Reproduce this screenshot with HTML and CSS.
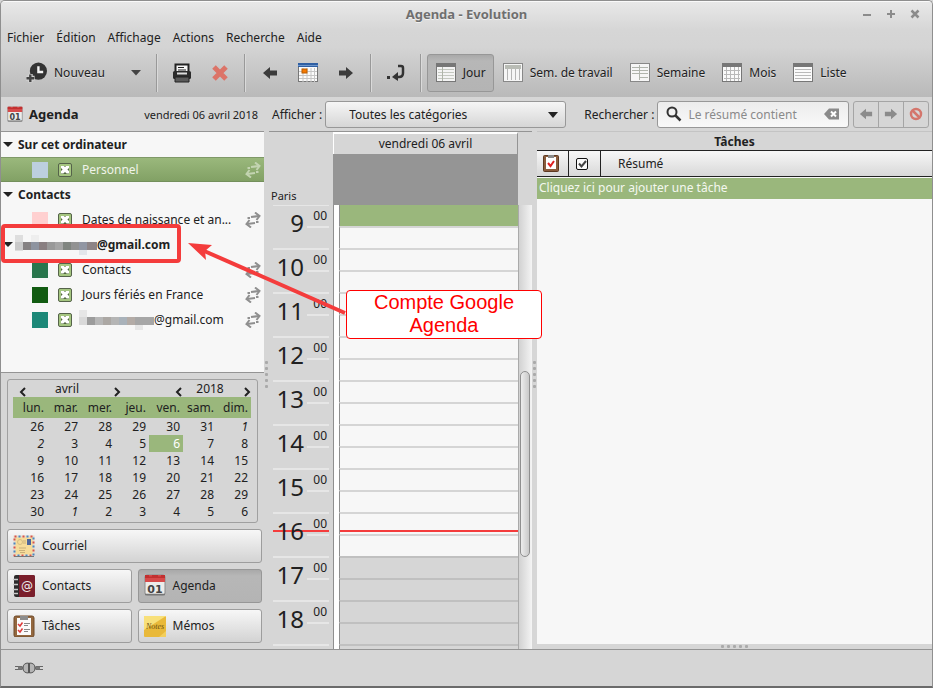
FILE: index.html
```html
<!DOCTYPE html>
<html lang="fr">
<head>
  <meta charset="UTF-8" />
  <meta name="viewport" content="width=device-width, initial-scale=1.0"/>
  <title>Agenda - Evolution</title>
  <link rel="stylesheet" href="styles.css">
</head>
<body>

<!-- shared icons -->
<svg class="defs" width="0" height="0" aria-hidden="true">
  <symbol id="sync" viewBox="0 0 16 16">
    <g fill="none" stroke="currentColor" stroke-width="2">
      <path d="M2.500 6h2.500M6 5L14 4"/>
      <path d="M10 .5l4.500 3.500-3 4"/>
      <path d="M13.500 10H11M10 11l-8 1"/>
      <path d="M6 15.500L1.500 12l3-4"/>
    </g>
  </symbol>
  <symbol id="arrow-left" viewBox="0 0 16 16">
    <path d="M1 8l7-6v3.500h7v5H8V14z" fill="currentColor"/>
  </symbol>
  <symbol id="arrow-right" viewBox="0 0 16 16">
    <path d="M15 8L8 2v3.500H1v5h7V14z" fill="currentColor"/>
  </symbol>
  <symbol id="calendar" viewBox="0 0 22 22">
    <rect x="1" y="1" width="20" height="20" rx="2" fill="#ececea" stroke="#8a8a8a"/>
    <path d="M1 1h20v7H1z" fill="#d64a4a"/>
    <path d="M1 1h4v1.500h3V1h6v1.500h3V1h4v3H1z" fill="#c23030"/>
    <path d="M1 20.500h20" stroke="#777" stroke-width="1.500"/>
  </symbol>
</svg>

<div class="window">
  <header class="chrome">
    <div class="titlebar">
      <h1>Agenda - Evolution</h1>
      <div class="win-buttons">
        <button aria-label="Réduire"><svg width="10" height="10"><path d="M1 6h8" stroke="#8b8b8b" stroke-width="2"/></svg></button>
        <button aria-label="Agrandir"><svg width="10" height="10"><path d="M1 5h8M5 1v8" stroke="#8b8b8b" stroke-width="2"/></svg></button>
        <button aria-label="Fermer"><svg width="10" height="10"><path d="M1.500 1.500l7 7M8.500 1.500l-7 7" stroke="#8b8b8b" stroke-width="2.500"/></svg></button>
      </div>
    </div>

    <nav class="menubar">
      <a href="#">Fichier</a>
      <a href="#">Édition</a>
      <a href="#">Affichage</a>
      <a href="#">Actions</a>
      <a href="#">Recherche</a>
      <a href="#">Aide</a>
    </nav>

    <div class="toolbar">
      <button class="tool">
        <svg width="21" height="22" viewBox="0 0 22 22">
          <circle cx="13" cy="9" r="9" fill="#333"/>
          <path d="M13 4v6h5" fill="none" stroke="#f4f4f4" stroke-width="2.500"/>
          <path d="M4.500 12v9M0 16.500h9" stroke="#d0d0d0" stroke-width="5"/>
          <path d="M4.500 12.500v8M.5 16.500h8" stroke="#444" stroke-width="2.500"/>
        </svg>
        Nouveau
      </button>
      <button class="tool drop" aria-label="Plus de choix"><svg width="10" height="6"><path d="M0 0h10L5 5.500z" fill="#444"/></svg></button>
      <span class="sep"></span>
      <button class="tool" aria-label="Imprimer">
        <svg width="20" height="20" viewBox="0 0 20 20">
          <rect x="1" y="8" width="18" height="8" rx="1.500" fill="#2c2c2c"/>
          <path d="M3.500 8V1.500h13V8" fill="#f6f6f6" stroke="#222" stroke-width="2"/>
          <path d="M6 4.500h6M6 7h8" stroke="#222"/>
          <rect x="5" y="9.500" width="10" height="2" fill="#ddd"/>
          <path d="M3 14h14v5H3z" fill="#5a5a5a" stroke="#222"/>
        </svg>
      </button>
      <button class="tool" aria-label="Supprimer">
        <svg width="20" height="20" viewBox="0 0 20 20"><path d="M4 4L16 16M16 4L4 16" stroke="#dc7468" stroke-width="5"/></svg>
      </button>
      <span class="sep"></span>
      <button class="tool dark" aria-label="Précédent"><svg width="20" height="16"><use href="#arrow-left"/></svg></button>
      <button class="tool" aria-label="Aujourd'hui">
        <svg width="20" height="20" viewBox="0 0 20 20">
          <rect x=".5" y=".5" width="19" height="18" fill="#fbfbfb" stroke="#777"/>
          <path d="M0 0h20v4H0z" fill="#2f5fa3"/>
          <path d="M0 2.500h20" stroke="#6f97cc"/>
          <path d="M1 8.500h18M1 12.500h18M1 15.500h18M5 5v14M9 5v14M13 5v14M16.500 5v14" stroke="#c6c6c6"/>
          <rect x="4" y="6" width="5" height="4" fill="#f57900" stroke="#b85c00"/>
        </svg>
      </button>
      <button class="tool dark" aria-label="Suivant"><svg width="20" height="16"><use href="#arrow-right"/></svg></button>
      <span class="sep"></span>
      <button class="tool" aria-label="Aller à la date">
        <svg width="20" height="20" viewBox="0 0 20 20">
          <path d="M12 3h3q2 0 2 2v5q0 4-4 4h-1" fill="none" stroke="#333" stroke-width="2.500"/>
          <path d="M6 14l6-5v9z" fill="#333"/>
          <rect x="1" y="13" width="3" height="3" fill="#333"/>
        </svg>
      </button>
      <span class="sep"></span>
      <button class="tool view active">
        <svg width="20" height="20" viewBox="0 0 20 20">
          <rect x=".5" y=".5" width="19" height="18" fill="#f4f4f4" stroke="#777"/>
          <path d="M0 0h20v4H0z" fill="#777"/>
          <path d="M2 6.500h16M2 9.500h16M2 12.500h16M2 15.500h16" stroke="#c4c8c0"/>
          <path d="M6.500 4v14" stroke="#b0b5aa"/>
        </svg>
        Jour
      </button>
      <button class="tool view">
        <svg width="20" height="20" viewBox="0 0 20 20">
          <rect x=".5" y=".5" width="19" height="18" fill="#f6f6f6" stroke="#888"/>
          <path d="M2 2h16v4H2z" fill="#b9bcb5"/>
          <path d="M4.500 6v11M8.500 6v11M12.500 6v11M16.500 6v11" stroke="#b5b5b5"/>
        </svg>
        Sem. de travail
      </button>
      <button class="tool view">
        <svg width="20" height="20" viewBox="0 0 20 20">
          <rect x=".5" y=".5" width="19" height="18" fill="#f6f6f6" stroke="#888"/>
          <path d="M2 4.500h16M2 7.500h16M2 10.500h16M10 14.500h8M9.500 2v15" stroke="#b0b4ac"/>
        </svg>
        Semaine
      </button>
      <button class="tool view">
        <svg width="20" height="20" viewBox="0 0 20 20">
          <rect x=".5" y=".5" width="19" height="18" fill="#fafafa" stroke="#777"/>
          <path d="M0 0h20v4H0z" fill="#777"/>
          <path d="M2 7.500h16M2 11.500h16M2 15.500h16M4.500 4v14M8.500 4v14M12.500 4v14M16.500 4v14" stroke="#b9b9b9"/>
        </svg>
        Mois
      </button>
      <button class="tool view">
        <svg width="20" height="20" viewBox="0 0 20 20">
          <rect x=".5" y=".5" width="19" height="18" fill="#fafafa" stroke="#777"/>
          <path d="M0 0h20v4H0z" fill="#777"/>
          <path d="M2 6.500h16M2 9.500h16M2 12.500h16M2 15.500h16" stroke="#b9b9b9"/>
        </svg>
        Liste
      </button>
    </div>
  </header>

  <div class="searchbar">
    <div class="view-title">
      <svg width="16" height="17" viewBox="0 0 22 23">
        <use href="#calendar" width="22" height="22"/>
        <text x="11" y="19" class="cal-digits">01</text>
      </svg>
      <strong>Agenda</strong>
      <span class="date">vendredi 06 avril 2018</span>
    </div>
    <label for="categories">Afficher :</label>
    <div class="combo">
      <select id="categories"><option>Toutes les catégories</option></select>
      <svg width="10" height="6"><path d="M0 0h10L5 6z" fill="#222"/></svg>
    </div>
    <label for="search" class="search-label">Rechercher :</label>
    <div class="search">
      <svg width="16" height="16" viewBox="0 0 16 16"><circle cx="6" cy="6" r="4.500" fill="none" stroke="#333" stroke-width="2"/><path d="M9.500 9.500l5 5" stroke="#333" stroke-width="2.500"/></svg>
      <input type="text" id="search" placeholder="Le résumé contient">
      <svg width="16" height="12" viewBox="0 0 16 12"><path d="M0 6l5-5.500h10v11H5z" fill="#8a8a8a"/><path d="M7 3.500l5 5M12 3.500l-5 5" stroke="#fff" stroke-width="2"/></svg>
    </div>
    <div class="search-nav">
      <button aria-label="Résultat précédent"><svg width="14" height="14"><use href="#arrow-left"/></svg></button>
      <button aria-label="Résultat suivant"><svg width="14" height="14"><use href="#arrow-right"/></svg></button>
      <button aria-label="Arrêter"><svg width="14" height="14" viewBox="0 0 14 14"><circle cx="7" cy="7" r="5" fill="none" stroke="#d4766c" stroke-width="2.500"/><path d="M3.500 3.500l7 7" stroke="#d4766c" stroke-width="2.500"/></svg></button>
    </div>
  </div>

  <main class="panes">
    <aside class="sidebar">
      <div class="tree">
        <div class="group">Sur cet ordinateur</div>
        <label class="source selected">
          <span class="swatch lightblue"></span>
          <input type="checkbox" checked>
          <span class="name">Personnel</span>
          <svg width="16" height="16"><use href="#sync"/></svg>
        </label>
        <div class="group">Contacts</div>
        <label class="source">
          <span class="swatch pink"></span>
          <input type="checkbox" checked>
          <span class="name">Dates de naissance et an...</span>
          <svg width="16" height="16"><use href="#sync"/></svg>
        </label>
        <div class="group account">
          <svg class="mosaic" width="82" height="20" viewBox="0 0 82 20">
            <path d="M0 0h8v16H0z" fill="#dedede"/><path d="M16 0h8v8h-8z" fill="#eee"/>
            <path d="M0 7h8v8H0z" fill="#c9c9c9"/><path d="M8 7h8v8H8z" fill="#858182"/>
            <path d="M16 7h8v8h-8z" fill="#8d939f"/><path d="M24 7h8v8h-8z" fill="#897f81"/>
            <path d="M32 7h8v8h-8z" fill="#999"/><path d="M40 7h8v8h-8z" fill="#a5a5a5"/>
            <path d="M48 7h8v8h-8z" fill="#808580"/><path d="M56 7h8v8h-8z" fill="#929292"/>
            <path d="M64 7h8v8h-8z" fill="#9196a3"/><path d="M72 7h10v8H72z" fill="#8d8486"/>
            <path d="M64 15h8v5h-8z" fill="#e3e6ea"/>
          </svg>@gmail.com
        </div>
        <label class="source">
          <span class="swatch green"></span>
          <input type="checkbox" checked>
          <span class="name">Contacts</span>
          <svg width="16" height="16"><use href="#sync"/></svg>
        </label>
        <label class="source">
          <span class="swatch darkgreen"></span>
          <input type="checkbox" checked>
          <span class="name">Jours fériés en France</span>
          <svg width="16" height="16"><use href="#sync"/></svg>
        </label>
        <label class="source">
          <span class="swatch teal"></span>
          <input type="checkbox" checked>
          <span class="name masked">
            <svg class="mosaic" width="75" height="20" viewBox="0 0 75 20">
              <path d="M0 0h8v15H0z" fill="#e6e6e6"/><path d="M0 7h8v8H0z" fill="#d9d9d9"/>
              <path d="M8 7h8v8H8z" fill="#9c9c9c"/><path d="M16 7h8v8h-8z" fill="#b7b7b7"/>
              <path d="M24 7h8v8h-8z" fill="#aca8a4"/><path d="M32 7h8v8h-8z" fill="#b5b5b5"/>
              <path d="M40 7h8v8h-8z" fill="#a9b2ba"/><path d="M48 7h8v8h-8z" fill="#b3aba6"/>
              <path d="M56 7h19v8H56z" fill="#a6a6a6"/><path d="M56 15h8v5h-8z" fill="#e6e6e6"/>
            </svg>@gmail.com</span>
          <svg width="16" height="16"><use href="#sync"/></svg>
        </label>
      </div>

      <div class="sidebar-bottom">
        <div class="minical">
          <div class="minical-head">
            <button aria-label="Mois précédent"><svg width="8" height="10"><path d="M6 1L2 5l4 4" fill="none" stroke="#222" stroke-width="2"/></svg></button>
            <span class="month">avril</span>
            <button aria-label="Mois suivant"><svg width="8" height="10"><path d="M2 1l4 4-4 4" fill="none" stroke="#222" stroke-width="2"/></svg></button>
            <button class="year-prev" aria-label="Année précédente"><svg width="8" height="10"><path d="M6 1L2 5l4 4" fill="none" stroke="#222" stroke-width="2"/></svg></button>
            <span class="year">2018</span>
            <button aria-label="Année suivante"><svg width="8" height="10"><path d="M2 1l4 4-4 4" fill="none" stroke="#222" stroke-width="2"/></svg></button>
          </div>
          <table>
            <thead>
              <tr><th>lun.</th><th>mar.</th><th>mer.</th><th>jeu.</th><th>ven.</th><th>sam.</th><th>dim.</th></tr>
            </thead>
            <tbody>
              <tr><td>26</td><td>27</td><td>28</td><td>29</td><td>30</td><td>31</td><td><i>1</i></td></tr>
              <tr><td><i>2</i></td><td>3</td><td>4</td><td>5</td><td class="today">6</td><td>7</td><td>8</td></tr>
              <tr><td>9</td><td>10</td><td>11</td><td>12</td><td>13</td><td>14</td><td>15</td></tr>
              <tr><td>16</td><td>17</td><td>18</td><td>19</td><td>20</td><td>21</td><td>22</td></tr>
              <tr><td>23</td><td>24</td><td>25</td><td>26</td><td>27</td><td>28</td><td>29</td></tr>
              <tr><td>30</td><td><i>1</i></td><td>2</td><td>3</td><td>4</td><td>5</td><td>6</td></tr>
            </tbody>
          </table>
        </div>

        <div class="switcher">
          <button class="wide">
            <svg width="22" height="22" viewBox="0 0 22 22">
              <rect x="1.500" y="1.500" width="19" height="19" fill="#f6dc9a" stroke="#e6dccb" stroke-width="2"/>
              <rect x="1.500" y="1.500" width="19" height="19" fill="none" stroke="#d9534a" stroke-width="2" stroke-dasharray="2 6"/>
              <rect x="1.500" y="1.500" width="19" height="19" fill="none" stroke="#4a86c4" stroke-width="2" stroke-dasharray="2 6" stroke-dashoffset="4"/>
              <rect x="14" y="4" width="4" height="6" fill="#4c659c"/>
              <circle cx="7" cy="7" r="2.500" fill="none" stroke="#d4bd84"/>
              <path d="M10 6h3M10 8h3M6 13h7M6 15.500h6M7 17.500h5" stroke="#c9b07a"/>
              <path d="M1 21.500h20" stroke="#777"/>
            </svg>
            Courriel
          </button>
          <button>
            <svg width="22" height="22" viewBox="0 0 22 22">
              <rect x="1" y="0" width="21" height="22" rx="2" fill="#2d2a2b"/>
              <path d="M6 0h14q2 0 2 2v18q0 2-2 2H6z" fill="#7b1f2c"/>
              <path d="M0 4.500h5M0 9.500h5M0 14.500h5M0 18.500h5" stroke="#c9c9c9" stroke-width="1.500"/>
              <text x="14" y="15" class="at">@</text>
            </svg>
            Contacts
          </button>
          <button class="active">
            <svg width="22" height="23" viewBox="0 0 22 23">
              <use href="#calendar" width="22" height="22"/>
              <text x="11" y="19" class="cal-digits">01</text>
            </svg>
            Agenda
          </button>
          <button>
            <svg width="22" height="22" viewBox="0 0 22 22">
              <rect x="1" y="1" width="20" height="21" rx="2" fill="#94683f" stroke="#6e4a2a"/>
              <path d="M4 3h14v17H4z" fill="#fbfbfb"/>
              <path d="M7 1h8v4H7z" fill="#8d8d8d"/>
              <path d="M5 9l2 2 2.500-3.500M5 15l2 2 2.500-3.500" fill="none" stroke="#dd3a3a" stroke-width="1.500"/>
              <path d="M11 8.500h6M11 10.500h4M11 14.500h6M11 16.500h4" stroke="#888"/>
            </svg>
            Tâches
          </button>
          <button>
            <svg width="22" height="22" viewBox="0 0 22 22">
              <rect x="0" y="1" width="22" height="21" rx="1" fill="#e9b93a"/>
              <path d="M0 1h22L0 15z" fill="#f8e07a"/>
              <path d="M15 22l7-6v6z" fill="#f3cf5c"/>
              <text x="11" y="14" class="note">Notes</text>
            </svg>
            Mémos
          </button>
        </div>
      </div>
    </aside>

    <div class="splitter"><i></i><i></i><i></i><i></i><i></i></div>

    <section class="day">
      <div class="day-top">
        <div class="zone">Paris</div>
        <div class="day-col">
          <h2>vendredi 06 avril</h2>
          <div class="allday"></div>
        </div>
      </div>
      <div class="day-body">
        <div class="ruler">
          <div class="hour"><b>9</b><span>00</span></div>
          <div class="hour"><b>10</b><span>00</span></div>
          <div class="hour"><b>11</b><span>00</span></div>
          <div class="hour"><b>12</b><span>00</span></div>
          <div class="hour"><b>13</b><span>00</span></div>
          <div class="hour"><b>14</b><span>00</span></div>
          <div class="hour"><b>15</b><span>00</span></div>
          <div class="hour now"><b>16</b><span>00</span></div>
          <div class="hour"><b>17</b><span>00</span></div>
          <div class="hour"><b>18</b><span>00</span></div>
          <div class="hour"></div>
        </div>
        <div class="slots">
          <div class="slot picked"></div>
          <div class="slot"></div>
          <div class="slot"></div>
          <div class="slot"></div>
          <div class="slot"></div>
          <div class="slot"></div>
          <div class="slot"></div>
          <div class="slot"></div>
          <div class="slot"></div>
          <div class="slot"></div>
          <div class="slot"></div>
          <div class="slot"></div>
          <div class="slot"></div>
          <div class="slot"></div>
          <div class="slot now"></div>
          <div class="slot"></div>
          <div class="slot off"></div>
          <div class="slot off"></div>
          <div class="slot off"></div>
          <div class="slot off"></div>
          <div class="slot off"></div>
        </div>
        <div class="scrollbar"><div class="thumb"></div></div>
      </div>
    </section>

    <div class="splitter"><i></i><i></i><i></i><i></i><i></i></div>

    <section class="tasks">
      <h2>Tâches</h2>
      <div class="task-list">
        <table>
          <thead>
            <tr>
              <th class="icon-col">
                <svg width="16" height="17" viewBox="0 0 16 17">
                  <rect x=".5" y=".5" width="15" height="16" rx="1" fill="#8a5c3c" stroke="#5e3a22"/>
                  <path d="M3 2h10v12H3z" fill="#fff"/><path d="M5 0h6v3H5z" fill="#8a8a8a"/>
                  <path d="M5 8l2.500 3L11 6" fill="none" stroke="#e02020" stroke-width="2"/>
                </svg>
              </th>
              <th class="icon-col">
                <svg width="14" height="14" viewBox="0 0 14 14">
                  <rect x="1.500" y="1.500" width="11" height="11" rx="1.500" fill="#fafafa" stroke="#111"/>
                  <path d="M4 6.500l2.500 3L11 4" fill="none" stroke="#444" stroke-width="2"/>
                </svg>
              </th>
              <th class="summary">Résumé</th>
            </tr>
          </thead>
          <tbody>
            <tr><td colspan="3">Cliquez ici pour ajouter une tâche</td></tr>
          </tbody>
        </table>
      </div>
      <div class="splitter horizontal"><i></i><i></i><i></i><i></i><i></i></div>
    </section>

    <div class="highlight"></div>
    <svg class="pointer" width="160" height="76" viewBox="0 0 160 76">
      <path d="M157 70L14 7" stroke="#f43c3c" stroke-width="4"/>
      <path d="M0 0L24 2L17 8L18 17z" fill="#f43c3c"/>
    </svg>
    <div class="callout">Compte Google Agenda</div>
  </main>

  <footer class="statusbar">
    <svg width="28" height="12" viewBox="0 0 28 12">
      <path d="M0 4.500h7M0 7.500h7M21 4.500h7M21 7.500h7" stroke="#666"/>
      <path d="M3 6h22" stroke="#777" stroke-width="3"/>
      <path d="M13.500 1Q8 1 8 6t5.500 5zM14.500 1Q20 1 20 6t-5.500 5z" fill="#b5b5b5" stroke="#555"/>
    </svg>
  </footer>
</div>

</body>
</html>
```
FILE: styles.css
```css
* {
  box-sizing: border-box;
}

body {
  margin: 0;
  font-family: "Noto Sans", "Open Sans", sans-serif;
  font-size: 12px;
  color: #212121;
  background: #d6d6d6;
}

button, input, select {
  font: inherit;
  color: inherit;
}

button {
  border: none;
  background: none;
  padding: 0;
  display: flex;
  align-items: center;
}

svg {
  flex: none;
}

h1, h2 {
  margin: 0;
}

.defs {
  position: absolute;
}

.window {
  height: 100vh;
  display: flex;
  flex-direction: column;
  background: #d6d6d6;
  border: 1px solid #8f8f8f;
  border-bottom: 2px solid #6b6b6b;
  border-radius: 5px 5px 0 0;
  overflow: hidden;
}

/* title, menus, toolbar */
.chrome {
  background: linear-gradient(#e8e8e8, #d6d6d6 28px, #d4d4d4 45px, #b9b9b9);
  border-top: 1px solid #fafafa;
}

.titlebar {
  height: 25px;
  display: flex;
  align-items: center;
  justify-content: center;
  position: relative;
}

.titlebar h1 {
  padding-bottom: 2px;
  font-size: 13px;
  line-height: 22px;
  color: #6f6f6f;
  text-shadow: 0 1px #f0f0f0;
}

.win-buttons {
  position: absolute;
  top: 7px;
  right: 12px;
  display: flex;
  gap: 14px;
}

.menubar {
  height: 20px;
  display: flex;
  align-items: center;
  gap: 12px;
  padding: 0 6px;
}

.menubar a {
  color: inherit;
  text-decoration: none;
}

.toolbar {
  height: 50px;
  display: flex;
  align-items: center;
  padding: 1px 0 0 17px;
}

.tool {
  min-width: 38px;
  height: 38px;
  padding: 0 7px;
  gap: 7px;
  justify-content: center;
  border: 1px solid transparent;
  border-radius: 3px;
  white-space: nowrap;
  text-shadow: 0 1px #dedede;
}

.tool.view {
  padding-left: 8px;
}

.tool.dark {
  color: #3c3c3c;
}

.tool.drop {
  min-width: 30px;
  margin-left: 8px;
}

.tool.active, .switcher .active {
  background: linear-gradient(#a9a9a9, #b7b7b7 6px, #b4b4b4);
  border-color: #979797;
  text-shadow: none;
}

.sep {
  width: 2px;
  height: 38px;
  margin: 0 5px;
  border-left: 1px solid #999;
  border-right: 1px solid #dadada;
}

/* search row */
.searchbar {
  height: 34px;
  display: flex;
  align-items: center;
  padding-right: 3px;
}

.searchbar label {
  flex: none;
}

.view-title {
  flex: none;
  width: 257px;
  margin-right: 14px;
  padding-left: 6px;
  display: flex;
  align-items: center;
  gap: 6px;
}

.view-title strong {
  font-size: 13px;
}

.view-title .date {
  margin-left: auto;
  font-size: 11px;
}

.cal-digits {
  font: bold 11px "DejaVu Sans", sans-serif;
  fill: #444;
  text-anchor: middle;
}

.combo {
  flex: none;
  width: 241px;
  margin-left: 3px;
  position: relative;
}

.combo select {
  appearance: none;
  width: 100%;
  height: 27px;
  padding: 0 23px;
  border: 1px solid #989898;
  border-radius: 3px;
  background: linear-gradient(#f6f6f6, #d6d6d6);
}

.combo svg {
  position: absolute;
  right: 8px;
  top: 11px;
}

.searchbar .search-label {
  margin-left: 18px;
}

.search {
  flex: 1;
  min-width: 0;
  height: 27px;
  margin-left: 3px;
  padding: 0 8px;
  display: flex;
  align-items: center;
  gap: 6px;
  border: 1px solid #989898;
  border-radius: 3px;
  background: linear-gradient(#ececec, #f9f9f9);
}

.search input {
  flex: 1;
  min-width: 0;
  padding: 0;
  border: none;
  outline: none;
  background: none;
}

.search input::placeholder {
  color: #8a8a8a;
}

.search-nav {
  margin-left: 4px;
  display: flex;
  border: 1px solid #a5a5a5;
  border-radius: 3px;
  color: #8b8b8b;
}

.search-nav button {
  width: 24px;
  height: 25px;
  color: inherit;
  justify-content: center;
}

.search-nav button + button {
  width: 25px;
  border-left: 1px solid #a5a5a5;
}

/* panes */
.panes {
  flex: 1;
  min-height: 0;
  display: flex;
  position: relative;
}

.splitter {
  flex: none;
  width: 5px;
  display: flex;
  flex-direction: column;
  align-items: center;
  justify-content: center;
  gap: 3px;
  padding-bottom: 32px;
}

.splitter.horizontal {
  width: auto;
  height: 5px;
  flex-direction: row;
  padding: 0;
}

.splitter i {
  width: 3px;
  height: 3px;
  background: #aaa;
  border-radius: 1px;
}

.sidebar {
  width: 263px;
  display: flex;
  flex-direction: column;
}

.tree {
  flex: 1;
  background: #f7f7f7;
  border-top: 1px solid #949494;
  border-bottom: 1px solid #949494;
}

.group {
  height: 25px;
  display: flex;
  align-items: center;
  font-weight: bold;
}

.group::before {
  content: "";
  margin: 0 5px 0 2px;
  border: 5px solid transparent;
  border-top-color: #222;
  border-bottom-width: 0;
}

.group.account::before {
  margin-right: 2px;
}

.source {
  height: 25px;
  display: flex;
  align-items: center;
  padding: 0 3px 0 31px;
}

.source > svg {
  color: #8f8f8f;
}

.source.selected {
  color: #f0f4ea;
  background: linear-gradient(#9ab87c, #82a165);
  border-top: 1px solid #7f9968;
  border-bottom: 1px solid #74905c;
}

.source.selected > svg {
  color: #c3d4b1;
}

.swatch {
  width: 16px;
  height: 16px;
  margin-right: 10px;
}

.lightblue { background: #bccfde; }
.pink { background: #ffd0d0; }
.green { background: #29764d; }
.darkgreen { background: #125c12; }
.teal { background: #1c8878; }

.source input {
  appearance: none;
  width: 14px;
  height: 14px;
  margin: 0;
  display: grid;
  place-items: center;
  background: #a5c680;
  border: 1px solid #55634a;
  border-radius: 2px;
}

.source input::before, .source input::after {
  content: "";
  grid-area: 1 / 1;
  width: 8px;
  height: 8px;
  background: #52683f;
}

.source input::after {
  background: #fff;
  clip-path: polygon(0 0, 30% 0, 50% 20%, 70% 0, 100% 0, 100% 30%, 80% 50%, 100% 70%, 100% 100%, 70% 100%, 50% 80%, 30% 100%, 0 100%, 0 70%, 20% 50%, 0 30%);
}

.source .name {
  margin: 0 auto 0 10px;
  white-space: nowrap;
}

.source .masked {
  margin-left: 7px;
  display: flex;
  align-items: center;
}

.sidebar-bottom {
  padding: 6px 2px 6px 6px;
}

.minical {
  margin: 0 4px 6px 0;
  padding: 0 6px 2px 5px;
  border: 1px solid #a0a0a0;
  border-radius: 3px;
}

.minical-head {
  height: 17px;
  display: flex;
  align-items: center;
  padding: 0 0 0 6px;
}

.minical-head button {
  padding-top: 6px;
}

.minical-head span {
  flex: 1;
  padding-right: 6px;
  text-align: center;
}

.minical-head .month {
  flex: 0 0 86px;
}

.minical-head .year-prev {
  margin-left: 54px;
}

.minical table {
  width: 100%;
  table-layout: fixed;
  border-collapse: collapse;
}

.minical th {
  height: 21px;
  padding: 1px 3px 0 0;
  font-weight: normal;
  line-height: 20px;
  text-align: right;
  background: #9ab77c;
}

.minical td {
  height: 17px;
  padding: 0 3px 0 0;
  line-height: 17px;
  text-align: right;
}

.minical .today {
  color: #fff;
  background: #9ab77c;
}

.switcher {
  display: grid;
  grid-template-columns: 1fr 1fr;
  gap: 6px;
}

.switcher button {
  height: 34px;
  padding: 0 5px 1px;
  gap: 7px;
  border: 1px solid #9d9d9d;
  border-radius: 3px;
  background: linear-gradient(#f7f7f7, #d3d3d3);
}

.switcher .wide {
  grid-column: span 2;
}

.at {
  font: 12px "DejaVu Sans", sans-serif;
  fill: #eee;
  text-anchor: middle;
}

.note {
  font: italic 8px "Liberation Serif", serif;
  fill: #6e5210;
  text-anchor: middle;
}

/* day view */
.day {
  width: 263px;
  display: flex;
  flex-direction: column;
  border-top: 1px solid #949494;
}

.day-top {
  height: 73px;
  flex: none;
  display: flex;
}

.zone {
  width: 64px;
  padding: 0 0 2px 2px;
  font-size: 11px;
  line-height: 15px;
  align-self: flex-end;
}

.day-col {
  width: 185px;
  display: flex;
  flex-direction: column;
}

.day-col h2 {
  height: 22px;
  border: 1px solid #fff;
  border-top-width: 2px;
  border-right-color: #949494;
  border-bottom: none;
  font-size: 12px;
  font-weight: normal;
  line-height: 19px;
  text-align: center;
}

.allday {
  flex: 1;
  background: #959595;
}

.day-body {
  flex: 1;
  min-height: 0;
  display: flex;
  overflow: hidden;
}

.ruler {
  width: 65px;
  margin-top: -1px;
  padding: 0 4px;
  border-right: 1px solid #8f8f8f;
}

.hour {
  height: 44px;
  display: grid;
  grid-template-columns: 31px 22px;
  justify-content: space-between;
  border-top: 2px solid #e6e6e6;
}

.hour b {
  font-size: 24px;
  font-weight: normal;
  line-height: 34px;
  text-align: right;
}

.hour span {
  height: 22px;
  padding-right: 2px;
  border-bottom: 2px solid #e6e6e6;
  line-height: 20px;
  text-align: right;
}

.hour.now {
  background: linear-gradient(#f43c3c, #f43c3c) 0 16px / 100% 2px no-repeat;
}

.slots {
  width: 185px;
  margin-top: -1px;
  border-left: 5px solid #fff;
  border-right: 1px solid #aaa;
}

.slot {
  height: 22px;
  border-top: 2px solid #d5d5d5;
  border-left: 1px solid #8f8f8f;
  background: #f7f7f7;
}

.slot.picked {
  background: #9ab77c;
  border-top-color: #9ab77c;
}

.slot.now {
  background: linear-gradient(#f43c3c, #f43c3c) 0 16px / 100% 2px no-repeat #f7f7f7;
}

.slot.off {
  background: #d6d6d6;
  border-top-color: #c0c0c0;
}

.scrollbar {
  flex: 1;
  display: flex;
  flex-direction: column;
  padding: 0 2px 0 1px;
  background: linear-gradient(to right, #d2d2d2, #f4f4f4);
}

.scrollbar::before {
  content: "";
  flex: 167;
}

.scrollbar::after {
  content: "";
  flex: 92;
}

.thumb {
  flex: 185;
  border: 1px solid #8f8f8f;
  border-radius: 5px;
  background: linear-gradient(to right, #ededed, #c9c9c9);
}

/* tasks */
.tasks {
  flex: 1;
  display: flex;
  flex-direction: column;
  border-top: 1px solid #c4c4c4;
}

.tasks h2 {
  height: 18px;
  font-size: 12px;
  line-height: 20px;
  text-align: center;
}

.task-list {
  flex: 1;
  background: #f7f7f7;
}

.task-list table {
  width: 100%;
  table-layout: fixed;
  border-collapse: separate;
  border-spacing: 0;
}

.task-list th {
  height: 27px;
  padding: 0;
  border: solid #222;
  border-width: 1px 0;
  background: linear-gradient(#f7f7f7, #d8d8d8);
  font-weight: normal;
}

.task-list .icon-col {
  width: 32px;
  border-right-width: 1px;
}

.icon-col svg {
  display: block;
  margin: 0 6px;
}

.task-list .summary {
  padding-left: 17px;
  text-align: left;
}

.task-list td {
  height: 22px;
  padding: 0 2px 2px;
  border-top: 1px solid #f7f7f7;
  color: #f4f7f0;
  background: #9ab77c;
}

/* annotation */
.highlight {
  position: absolute;
  left: 0;
  top: 93px;
  width: 180px;
  height: 39px;
  border: 4px solid #f43c3c;
  border-radius: 4px;
}

.pointer {
  position: absolute;
  left: 187px;
  top: 112px;
}

.callout {
  position: absolute;
  left: 345px;
  top: 159px;
  width: 196px;
  height: 49px;
  padding: 0 20px;
  border: 1px solid #f00;
  border-radius: 4px;
  background: #fff;
  color: #f00;
  font: 20px/23px "Liberation Sans", Arial, sans-serif;
  text-align: center;
}

.statusbar {
  height: 37px;
  display: flex;
  align-items: center;
  padding-left: 14px;
  border-top: 1px solid #949494;
}
```
